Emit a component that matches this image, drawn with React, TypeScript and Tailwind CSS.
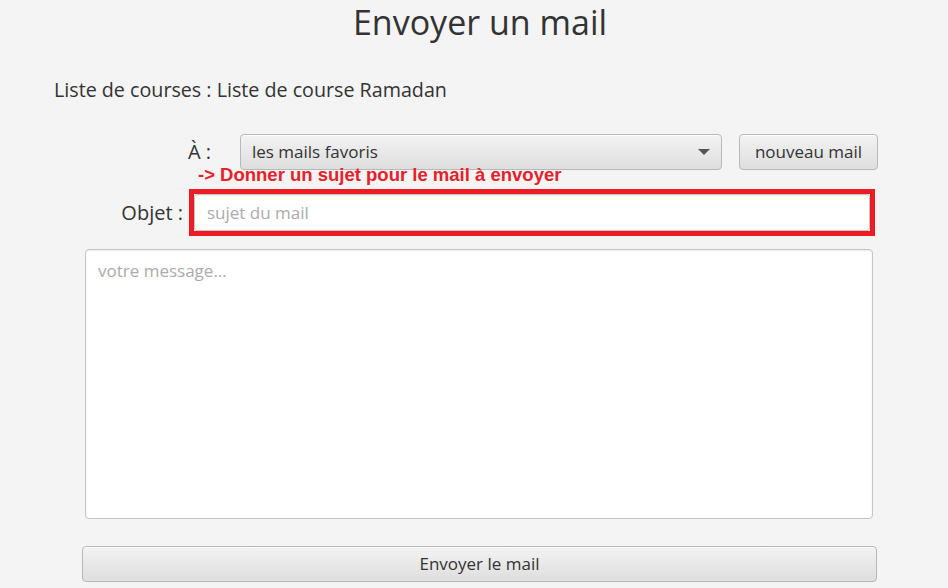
import React from "react";

const font = { fontFamily: '"Open Sans", "Noto Sans", sans-serif' };

export default function App() {
  return (
    <div
      className="relative w-[948px] h-[588px] bg-[#f4f4f4] overflow-hidden text-[#333333] flex flex-col"
      style={font}
    >
      <div className="h-[44px] flex items-center justify-center pl-[12px] text-[34px] font-normal">
        Envoyer un mail
      </div>

      <div className="mt-[34px] h-[24px] flex items-center pl-[54px] text-[19.7px]">
        Liste de courses : Liste de course Ramadan
      </div>

      <div className="mt-[32px] h-[36px] flex items-center">
        <div className="w-[211px] text-right text-[20px]">À :</div>
        <div className="ml-[29px] w-[482px] h-[36px] rounded-[4px] border border-[#b8b8b8] bg-gradient-to-b from-[#f3f3f3] to-[#dedede] flex items-center pl-[11px] pr-[9px] text-[17px] shadow-[inset_0_1px_0_#ffffff]">
          <span className="flex-1">les mails favoris</span>
          <svg width="12" height="7" viewBox="0 0 12 7" className="mr-[2px]">
            <polygon points="0,0 12,0 6,6" fill="#555555" />
          </svg>
        </div>
        <button className="ml-[17px] w-[139px] h-[36px] rounded-[4px] border border-[#b8b8b8] bg-gradient-to-b from-[#f3f3f3] to-[#dedede] text-[17px] text-[#333333] shadow-[inset_0_1px_0_#ffffff]">
          nouveau mail
        </button>
      </div>

      <div className="mt-[19px] h-[47px] flex items-center">
        <div className="w-[183px] text-right text-[20px]">Objet :</div>
        <div className="ml-[6px] w-[686px] h-[47px] border-[5px] border-[#ed1c24] bg-[#f4f4f4]">
          <div className="h-full w-full rounded-[3px] border border-[#c6c6c6] bg-white shadow-[inset_0_1px_2px_rgba(0,0,0,0.08)] flex items-center pl-[12px] text-[17px] text-[#ababab]">
            sujet du mail
          </div>
        </div>
      </div>

      <div className="mt-[13px] ml-[85px] w-[788px] h-[270px] rounded-[4px] border border-[#c4c4c4] bg-white shadow-[inset_0_1px_2px_rgba(0,0,0,0.08)] px-[12px] pt-[8px] text-[17px] text-[#ababab]">
        votre message...
      </div>

      <button className="mt-[27px] ml-[82px] w-[795px] h-[36px] rounded-[4px] border border-[#b8b8b8] bg-gradient-to-b from-[#f3f3f3] to-[#dedede] text-[17px] text-[#333333] shadow-[inset_0_1px_0_#ffffff]">
        Envoyer le mail
      </button>

      <div
        className="absolute left-[198px] top-[164px] text-[18.5px] font-bold text-[#e8202a] leading-[22px] whitespace-nowrap"
        style={{ fontFamily: '"Liberation Sans", Arial, sans-serif' }}
      >
        -&gt; Donner un sujet pour le mail à envoyer
      </div>
    </div>
  );
}
